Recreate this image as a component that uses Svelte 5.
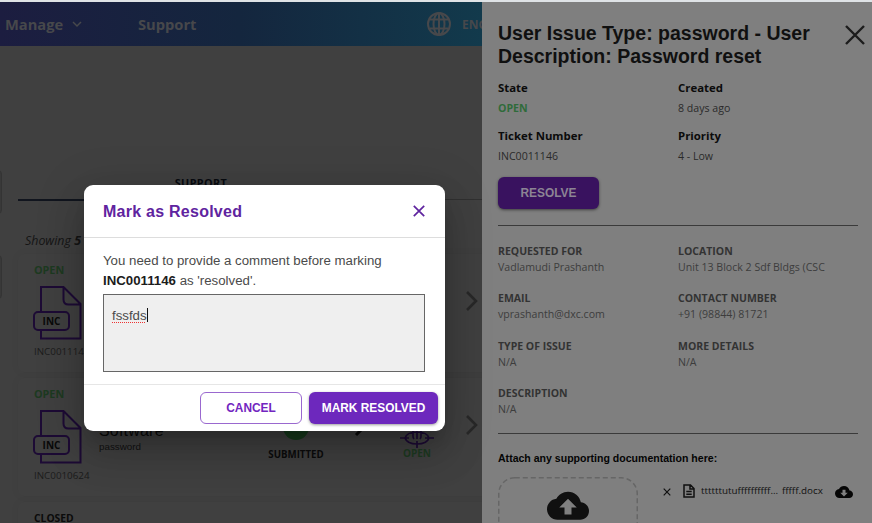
<script>
  const tickets = [
    { state: 'OPEN', number: 'INC0011146', note: '' },
    { state: 'OPEN', number: 'INC0010624', title: 'Software', note: 'password' }
  ];
  const summary = [
    { label: 'State', value: 'OPEN', open: true },
    { label: 'Created', value: '8 days ago' },
    { label: 'Ticket Number', value: 'INC0011146' },
    { label: 'Priority', value: '4 - Low' }
  ];
  const details = [
    { label: 'REQUESTED FOR', value: 'Vadlamudi Prashanth' },
    { label: 'LOCATION', value: 'Unit 13 Block 2 Sdf Bldgs (CSC' },
    { label: 'EMAIL', value: 'vprashanth@dxc.com' },
    { label: 'CONTACT NUMBER', value: '+91 (98844) 81721' },
    { label: 'TYPE OF ISSUE', value: 'N/A' },
    { label: 'MORE DETAILS', value: 'N/A' },
    { label: 'DESCRIPTION', value: 'N/A' }
  ];
</script>

<div class="app">
  <div class="page">
    <header>
      <span class="manage">Manage</span>
      <svg class="caret" width="10" height="7" viewBox="0 0 10 7"><path d="M1 1l4 4 4-4" /></svg>
      <span class="support">Support</span>
      <svg class="globe" width="26" height="26" viewBox="0 0 26 26">
        <circle cx="13" cy="13" r="11" /><ellipse cx="13" cy="13" rx="5.5" ry="11" />
        <path d="M13 2v22M3.5 8.5h19M3.5 17.5h19" />
      </svg>
      <span class="lang">ENG</span>
    </header>
    <main>
      <div class="tabs"><span class="tab">SUPPORT</span><span class="tab rest"></span></div>
      <p class="showing">Showing <b>5</b></p>
      {#each tickets as t}
        <section class="card">
          <div class="identity">
            <span class="open">{t.state}</span>
            <svg width="52" height="56" viewBox="0 0 52 56">
              <path class="doc" d="M8 2h22.500l17 17v34.500H8zM30.500 2v12.500q0 5 5 5h12" />
              <rect class="doc badge" x="1" y="27" width="35" height="18" rx="4" />
              <text x="18.5" y="40">INC</text>
            </svg>
            <span class="number">{t.number}</span>
          </div>
          <div class="subject">{#if t.title}<h3>{t.title}</h3><span>{t.note}</span>{/if}</div>
          <div class="step submitted">{#if t.title}<i class="dot"></i><span>SUBMITTED</span>{/if}</div>
          <svg class="arrow" width="14" height="22" viewBox="0 0 14 22"><path d="M2 2l9 9-9 9" /></svg>
          <div class="step current">
            {#if t.title}
              <svg width="34" height="34" viewBox="0 0 34 34">
                <path d="M5 24q2-6 12-6t12 6q-2 6-12 6T5 24zM0 24h9M25 24h9M17 27v7M13 8v14q0 2 1 3M17 8v17M21 8v14q0 2-1 3" />
              </svg>
              <span class="open">OPEN</span>
            {/if}
          </div>
          <svg class="next" width="14" height="22" viewBox="0 0 14 22"><path d="M2 2l9 9-9 9" /></svg>
        </section>
      {/each}
      <section class="card last"><span class="closed">CLOSED</span></section>
    </main>
    <i class="sliver first"></i>
    <i class="sliver second"></i>
  </div>

  <aside>
    <div class="heading">
      <h1>User Issue Type: password - User<br />Description: Password reset</h1>
      <svg width="20" height="20" viewBox="0 0 20 20"><path d="M1 1l18 18M19 1L1 19" /></svg>
    </div>
    <dl class="summary">
      {#each summary as s}
        <div><dt>{s.label}</dt><dd class:green={s.open}>{s.value}</dd></div>
      {/each}
    </dl>
    <button class="resolve">RESOLVE</button>
    <hr />
    <dl class="details">
      {#each details as d}
        <div><dt>{d.label}</dt><dd>{d.value}</dd></div>
      {/each}
    </dl>
    <hr />
    <h2>Attach any supporting documentation here:</h2>
    <div class="files">
      <div class="drop">
        <svg width="140" height="60" viewBox="0 0 140 60">
          <rect x="0.75" y="0.75" width="138.5" height="90" rx="16" />
          <path transform="translate(49 7.7) scale(1.75)" d="M19.35 10.04C18.67 6.59 15.64 4 12 4 9.11 4 6.6 5.64 5.35 8.04 2.34 8.36 0 10.91 0 14c0 3.31 2.69 6 6 6h13c2.76 0 5-2.24 5-5 0-2.64-2.05-4.78-4.65-4.96zM14 13v4h-4v-4H7l5-5 5 5h-3z" />
        </svg>
      </div>
      <svg class="remove" width="8" height="8" viewBox="0 0 8 8"><path d="M.7.7l6.6 6.6M7.3.7L.7 7.3" /></svg>
      <svg class="file" width="12" height="14" viewBox="0 0 12 14"><path d="M1 1h6.5L11 4.5V13H1zM7 1v4h4M3.3 7.6h5.4M3.3 10.3h5.4" /></svg>
      <span class="name">ttttttutuffffffffff...</span><span class="ext">fffff.docx</span>
      <svg class="download" width="18" height="18" viewBox="0 0 24 24"><path d="M19.35 10.04C18.67 6.59 15.64 4 12 4 9.11 4 6.6 5.64 5.35 8.04 2.34 8.36 0 10.91 0 14c0 3.31 2.69 6 6 6h13c2.76 0 5-2.24 5-5 0-2.64-2.05-4.78-4.65-4.96zM17 13l-5 5-5-5h3V9h4v4h3z" /></svg>
    </div>
  </aside>

  <div class="modal">
    <div class="modal-head">
      <h2>Mark as Resolved</h2>
      <svg width="12" height="12" viewBox="0 0 12 12"><path d="M.8.8l10.4 10.4M11.2.8L.8 11.2" /></svg>
    </div>
    <div class="modal-body">
      <p>You need to provide a comment before marking<br /><b>INC0011146</b> as 'resolved'.</p>
      <div class="comment"><span>fssfds</span><i></i></div>
    </div>
    <div class="modal-foot">
      <button class="cancel">CANCEL</button>
      <button class="mark">MARK RESOLVED</button>
    </div>
  </div>
</div>

<style>
  * { box-sizing: border-box; margin: 0; padding: 0; }
  .app { position: relative; width: 872px; height: 523px; overflow: hidden; background: #404040; border-top: 2px solid #dfe3e6; font-family: "Open Sans", sans-serif; }
  svg { display: block; fill: none; flex: none; }
  header { display: flex; align-items: center; height: 44px; padding-left: 5px; background: linear-gradient(90deg, #1c1d40 0, #14263e 240px, #123a4c 482px); color: #47484b; font-weight: 700; font-size: 14.7px; white-space: nowrap; }
  .manage { width: 58px; }
  .caret { margin-left: 9px; stroke: #47484b; stroke-width: 1.5; }
  .support { width: 58px; margin-left: 56px; }
  .globe { margin-left: 230px; stroke: #47484b; stroke-width: 2; }
  .lang { margin-left: 10px; font-size: 12px; }
  main { padding-left: 18px; width: 500px; }
  .tabs { display: flex; height: 155px; }
  .tab { width: 366px; display: flex; align-items: flex-end; justify-content: center; padding-bottom: 9px; border-bottom: 2px solid #11151e; color: #080b10; font-weight: 700; font-size: 10.8px; letter-spacing: .4px; line-height: 15px; }
  .rest { border-bottom: 1px solid #303030; height: 154px; width: 116px; }
  .showing { font-size: 12.4px; font-style: italic; line-height: 16px; padding: 32px 0 0 7px; color: #151515; height: 53px; }
  .card { display: flex; height: 118px; margin-bottom: 6px; padding-left: 16px; border-radius: 6px; background: #404040; box-shadow: 0 0 9px rgba(0,0,0,.05); white-space: nowrap; }
  .identity { width: 65px; display: flex; flex-direction: column; padding-top: 8px; }
  .open { color: #1d3a21; font-weight: 700; font-size: 10.8px; line-height: 15px; }
  .identity svg { margin: 8px 0 0 -1px; }
  .doc { stroke: #1d0b35; stroke-width: 2; }
  .badge { fill: #404040; }
  text { font: 700 10px "Open Sans", sans-serif; fill: #0a0a0a; text-anchor: middle; }
  .number { font-size: 9.8px; line-height: 14px; color: #1c1c1c; margin-top: 4px; }
  .subject { width: 147px; padding-top: 44px; font: 10px/14px "Liberation Sans", sans-serif; color: #121212; }
  h3 { font: 16px/18px "Liberation Sans", sans-serif; letter-spacing: .2px; color: #0a0a0a; }
  .subject span { font-size: 9.8px; }
  .step { display: flex; flex-direction: column; align-items: center; width: 100px; color: #0b0b0b; font-weight: 700; font-size: 9.7px; line-height: 14px; }
  .submitted { padding-top: 36px; }
  .dot { width: 26px; height: 26px; border-radius: 50%; background: #173a1d; margin-bottom: 8px; }
  .arrow { stroke: #0a0a0a; stroke-width: 3; margin: 37px 0 0 8px; }
  .current { width: 84px; padding-top: 36px; margin-left: 7px; }
  .current svg { stroke: #1d0b35; stroke-width: 1.7; }
  .current .open { font-size: 10px; line-height: 14px; margin-top: -2px; }
  .next { stroke: #282828; stroke-width: 2.6; margin: 36px 0 0 6px; }
  .last { padding-top: 9px; }
  .closed { font-size: 10.3px; line-height: 14px; font-weight: 700; color: #0b0b0b; }
  .sliver { position: absolute; left: -6px; width: 8px; height: 44px; border-radius: 4px; background: #393939; border: 1px solid #343434; }
  .first { top: 168px; }
  .second { top: 253px; }

  aside { position: absolute; left: 482px; top: 0; width: 390px; height: 521px; overflow: hidden; background: #7f7f7f; padding: 20px 14px 0 16px; color: #111; }
  .heading { display: flex; justify-content: space-between; margin-right: -7px; }
  .heading svg { stroke: #1c1c1c; stroke-width: 2.4; margin: 3px 0 0; }
  h1 { font: 700 19.5px/23px "Liberation Sans", sans-serif; white-space: nowrap; color: #101010; }
  dl { display: grid; grid-template-columns: 180px 180px; white-space: nowrap; }
  .summary { padding-top: 12px; grid-auto-rows: 48px; }
  .summary dt { font-weight: 700; font-size: 11.4px; line-height: 16px; color: #0b0b0b; }
  .summary dd { font-size: 10.6px; line-height: 16px; padding-top: 4px; color: #2a2a2a; }
  .summary dd.green { color: #2f6b3a; font-weight: 700; }
  button { font: 700 11.9px "Liberation Sans", sans-serif; border-radius: 6px; border: 0; display: flex; align-items: center; justify-content: center; }
  .resolve { margin-top: 1px; width: 101px; height: 32px; background: #39125f; color: #8c8494; box-shadow: 0 1px 3px rgba(0,0,0,.5); }
  hr { border: 0; height: 1px; width: 360px; background: #3a3a3a; margin-top: 16px; }
  .details { padding-top: 16.5px; grid-auto-rows: 47.5px; height: 207px; }
  .details dt { font-weight: 700; font-size: 10.5px; line-height: 16px; color: #333; }
  .details dd { font-size: 10.6px; line-height: 16px; color: #3d3d3d; }
  .details + hr { margin-top: 0; }
  aside h2 { font: 700 10.55px/14px "Liberation Sans", sans-serif; color: #050505; margin-top: 17px; white-space: nowrap; }
  .files { display: flex; height: 60px; margin-top: 12px; white-space: nowrap; font-size: 9.8px; line-height: 14px; color: #111; }
  .drop rect { stroke: #666; stroke-width: 1.5; stroke-dasharray: 5 3; }
  .drop path { fill: #101010; }
  .remove { stroke: #111; margin: 11px 0 0 25px; stroke-width: 1.2; }
  .file { stroke: #111; stroke-width: 1.5; margin: 7px 0 0 12px; }
  .name { width: 81px; margin: 7px 0 0 6px; }
  .ext { width: 42px; margin-top: 7px; }
  .download { fill: #060606; margin: 6px 0 0 11px; }

  .modal { position: absolute; left: 84px; top: 183px; width: 361px; height: 246px; background: #fff; border-radius: 9px; box-shadow: 0 11px 15px -7px rgba(0,0,0,.2), 0 24px 38px 3px rgba(0,0,0,.14), 0 9px 46px 8px rgba(0,0,0,.12); font-family: "Liberation Sans", sans-serif; }
  .modal-head { height: 53px; padding: 0 20px 0 19px; display: flex; align-items: center; justify-content: space-between; border-bottom: 1px solid #ddd; }
  .modal-head h2 { font: 700 16px/20px "Liberation Sans", sans-serif; color: #5f249f; letter-spacing: .25px; padding-top: 1px; }
  .modal-head svg { stroke: #5f249f; stroke-width: 1.7; }
  .modal-body { height: 147px; padding: 13px 19px 0; border-bottom: 1px solid #e6e6e6; }
  .modal-body p { font-size: 13.25px; line-height: 19.5px; white-space: nowrap; height: 43px; color: #4a4a4a; }
  .modal-body b { color: #1c1c1c; }
  .comment { display: flex; width: 322px; height: 78px; padding: 12px 8px; background: #efefef; border: 1px solid #666; color: #4a4a4a; font-size: 13.25px; line-height: 17px; }
  .comment span { height: 17px; text-decoration: underline dotted #e33 1px; text-decoration-skip-ink: none; text-underline-offset: 2px; }
  .comment i { width: 1px; height: 14px; margin-top: 1px; background: #111; }
  .modal-foot { display: flex; justify-content: flex-end; gap: 7px; padding: 7px 7px 0; }
  .cancel { width: 102px; height: 32px; border: 1px solid #9a68cf; background: #fff; color: #7226c0; }
  .mark { width: 129px; height: 32px; background: #6d28bd; color: #fff; box-shadow: 0 1px 3px rgba(0,0,0,.4); }
</style>
